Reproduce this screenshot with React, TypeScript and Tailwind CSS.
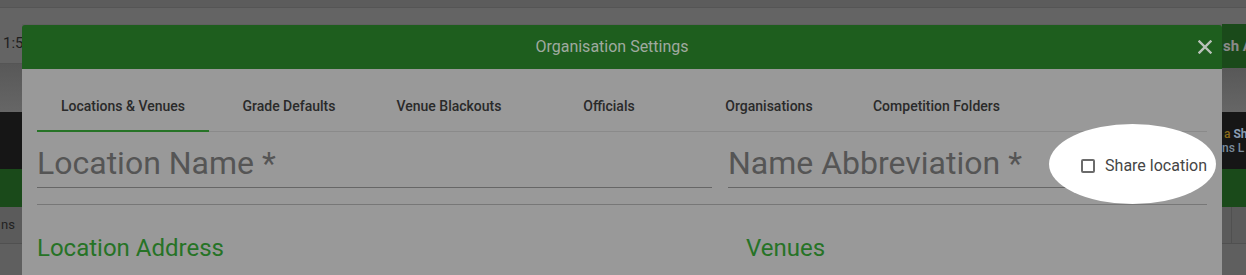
import React from 'react'

const tabs = [
  'Locations & Venues',
  'Grade Defaults',
  'Venue Blackouts',
  'Officials',
  'Organisations',
  'Competition Folders',
]

const App: React.FC = () => {
  return (
    <div
      className="relative h-[275px] w-[1246px] overflow-hidden bg-[#5f5f5f]"
      style={{ fontFamily: 'Roboto, "Noto Sans", Arial, sans-serif' }}
    >
      {/* dimmed page behind the dialog */}
      <div className="h-[8px] border-b border-[#555555] bg-[#5c5c5c]" />
      <div className="h-[16px] bg-[#646464]" />
      <div className="flex h-[250px]">
        <div className="flex w-[22px] flex-col">
          <div className="flex h-[40px] items-center border-b border-[#555555] bg-[#646464] pl-[3px] text-[15px] text-[#1e1e1e]">
            <span>1:5</span>
          </div>
          <div className="h-[48px] bg-gradient-to-b from-[#585858] to-[#666666]" />
          <div className="h-[57px] bg-[#161616]" />
          <div className="h-[38px] bg-[#1a4a1a]" />
          <div className="flex h-[37px] items-center border-b border-[#505050] bg-[#5b5b5b] text-[13px] text-[#222222]">
            <span className="pl-[1px]">ns</span>
          </div>
          <div className="flex-1 bg-[#5f5f5f]" />
        </div>
        <div className="flex-1" />
        <div className="flex w-[24px] flex-col">
          <div className="flex h-[44px] items-center overflow-hidden whitespace-nowrap bg-[#1a4a1a] pl-[1px] text-[15px] font-bold text-[#8a8a8a]">
            <span>sh A</span>
          </div>
          <div className="h-[44px] bg-gradient-to-b from-[#585858] to-[#666666]" />
          <div className="flex h-[57px] flex-col justify-center overflow-hidden whitespace-nowrap bg-[#161616] text-[12px] font-medium leading-[14px]">
            <span className="pl-[2px] text-[#8a6a1a]">
              a <span className="font-bold text-[#8a9bb0]">Sh</span>
            </span>
            <span className="text-[#7a8a9a]">ns L</span>
          </div>
          <div className="h-[38px] bg-[#1a4a1a]" />
          <div className="flex h-[37px] border-b border-[#505050] bg-[#5b5b5b]">
            <div className="w-[10px] border-r border-[#505050]" />
          </div>
          <div className="flex-1 bg-[#5f5f5f]" />
        </div>
      </div>

      {/* dialog */}
      <div className="absolute left-[22px] top-[25px] w-[1200px] overflow-hidden rounded-t-[3px]">
        <div className="relative flex h-[44px] items-center justify-center bg-[#1e5e1e] pr-[20px]">
          <span className="text-[16px] text-[#a0aaa0]">Organisation Settings</span>
          <svg
            className="absolute right-[10px] top-[15px]"
            width="14"
            height="14"
            viewBox="0 0 14 14"
            stroke="#b9c2b9"
            strokeWidth="2.4"
            strokeLinecap="square"
          >
            <path d="M1.5 1.5 L12.5 12.5 M12.5 1.5 L1.5 12.5" />
          </svg>
        </div>

        <div className="h-[206px] bg-[#999999] px-[15px] pt-[13px]">
          <div className="flex border-b border-[#8a8a8a]">
            {tabs.map((tab, i) => (
              <div
                key={tab}
                className="relative flex h-[49px] min-w-[160px] items-center justify-center px-6 text-[14px] font-medium text-[#2a2a2a]"
              >
                {tab}
                {i === 0 && (
                  <span className="absolute -bottom-px left-0 right-0 h-[2px] bg-[#267326]" />
                )}
              </div>
            ))}
          </div>

          <div className="flex">
            <div className="w-[675px] border-b border-[#666666] pb-[8px] pt-[15px] text-[32px] leading-none text-[#555555]">
              Location Name *
            </div>
            <div className="ml-[16px] w-[338px] border-b border-[#666666] pb-[8px] pt-[15px] text-[32px] leading-none text-[#555555]">
              Name Abbreviation *
            </div>
            <div className="relative ml-auto mt-[24px] flex h-[20px] items-center gap-[10px] self-start">
              <span className="absolute -left-[32px] -top-[32px] h-[80px] w-[167px] rounded-[50%] bg-white" />
              <span className="relative h-[14px] w-[14px] rounded-[2px] border-2 border-[#6b6b6b]" />
              <span className="relative whitespace-nowrap text-[16px] text-[#454545]">Share location</span>
            </div>
          </div>

          <div className="mt-[16px] border-b border-[#777777]" />

          <div className="mt-[31px] flex text-[24px] leading-none text-[#267326]">
            <div className="w-[709px]">Location Address</div>
            <div>Venues</div>
          </div>
        </div>
      </div>
    </div>
  )
}

export default App
